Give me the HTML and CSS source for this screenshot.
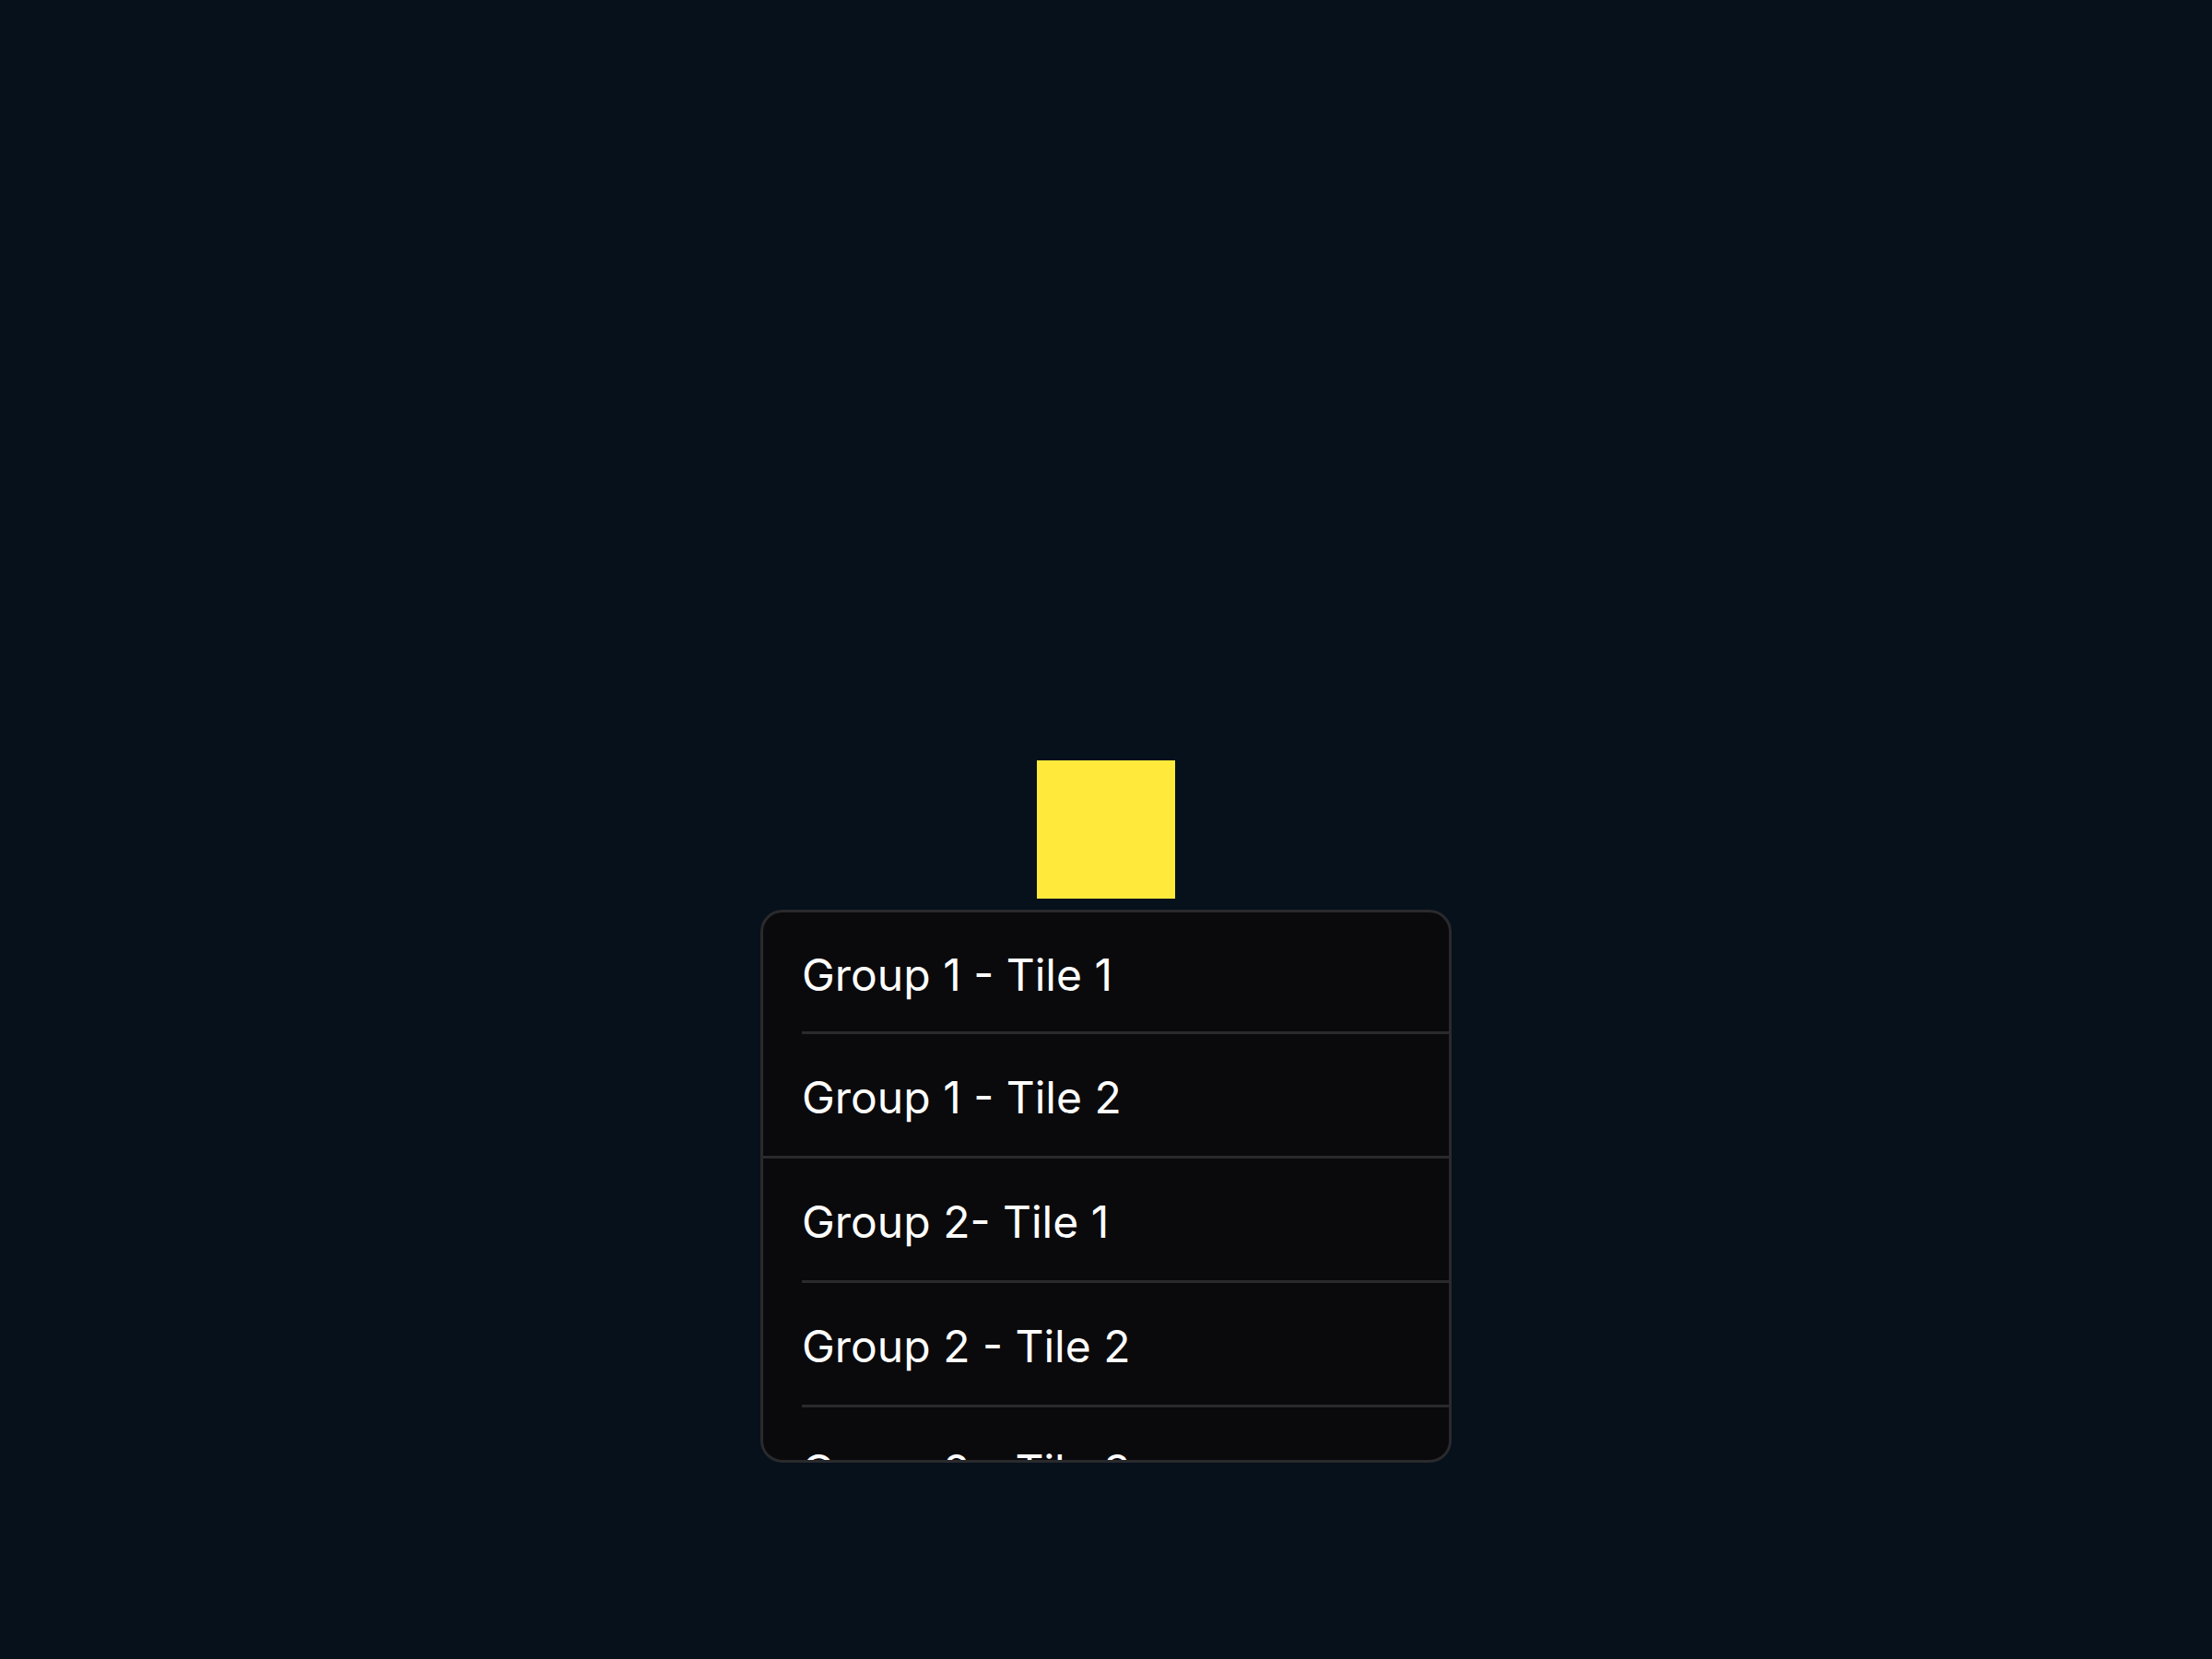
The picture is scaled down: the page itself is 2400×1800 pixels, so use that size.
FILE: index.html
```html
<!DOCTYPE html>
<html lang="en">
<head>
<meta charset="utf-8">
<title>Tiles</title>
<link rel="stylesheet" href="styles.css">
</head>
<body>
<div class="anchor">
  <div class="trigger"></div>
  <div class="popover">
    <div class="row inset first">Group 1 - Tile 1</div>
    <div class="row full">Group 1 - Tile 2</div>
    <div class="row inset">Group 2- Tile 1</div>
    <div class="row inset">Group 2 - Tile 2</div>
    <div class="row">Group 2 - Tile 3</div>
  </div>
</div>
</body>
</html>
```
FILE: styles.css
```css
html, body {
  margin: 0;
  padding: 0;
  background: #06111c;
  height: 100%;
}
body {
  display: flex;
  align-items: center;
  justify-content: center;
  font-family: Inter, "Noto Sans", sans-serif;
}
.anchor {
  position: relative;
  width: 150px;
  height: 150px;
}
.trigger {
  width: 150px;
  height: 150px;
  background: #ffea3b;
}
.popover {
  position: absolute;
  top: 162px;
  left: 50%;
  transform: translateX(-50%);
  width: 750px;
  height: 600px;
  box-sizing: border-box;
  background: #0a0a0c;
  border: 3px solid #2a2a2d;
  border-radius: 24px;
  overflow: hidden;
}
.row {
  position: relative;
  height: 126px;
  padding-top: 6px;
  box-sizing: content-box;
  display: flex;
  align-items: center;
  padding-left: 42px;
  color: #ffffff;
  font-size: 48px;
  line-height: 1;
  letter-spacing: 0;
}
.row.first {
  height: 123px;
}
.row.full {
  border-bottom: 3px solid #2a2a2d;
}
.row.inset::after {
  content: "";
  position: absolute;
  left: 42px;
  right: 0;
  bottom: -3px;
  height: 3px;
  background: #2a2a2d;
}
.row.inset {
  margin-bottom: 3px;
}
```
